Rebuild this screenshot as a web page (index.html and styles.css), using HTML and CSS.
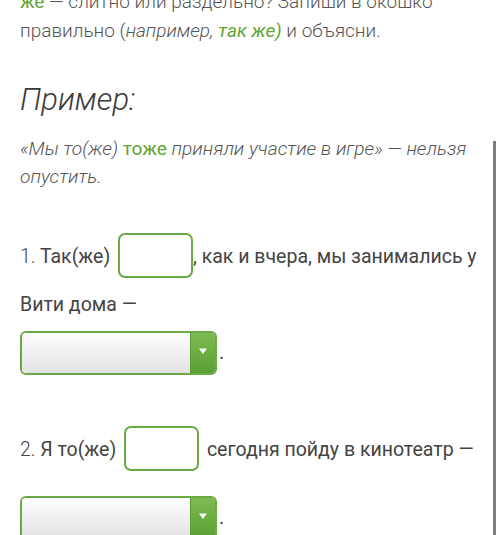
FILE: index.html
```html
<!DOCTYPE html>
<html lang="ru">
<head>
<meta charset="utf-8">
<link rel="stylesheet" href="styles.css">
</head>
<body>
<div class="page">
  <p class="intro"><span class="green">же</span> — слитно или раздельно? Запиши в окошко<br>правильно (<i>например, <span class="green">так же)</span></i> и объясни.</p>
  <h2 class="title">Пример:</h2>
  <p class="quote">«Мы то(же) <span class="green up">тоже</span> приняли участие в игре» — нельзя<br>опустить.</p>

  <div class="task task1">
    <p class="line"><span class="num">1.</span> Так(же) <span class="box"></span>, как и вчера, мы занимались у<br>Вити дома —</p>
    <p class="selline"><span class="select"><span class="sel-body"></span><span class="sel-btn"><svg width="10" height="8" viewBox="0 0 10 8"><path d="M1 1.5h8L5 7z" fill="#fff"/></svg></span></span>.</p>
  </div>

  <div class="task task2">
    <p class="line"><span class="num">2.</span> Я то(же) <span class="box box2"></span> сегодня пойду в кинотеатр —</p>
    <p class="selline"><span class="select"><span class="sel-body"></span><span class="sel-btn"><svg width="10" height="8" viewBox="0 0 10 8"><path d="M1 1.5h8L5 7z" fill="#fff"/></svg></span></span>.</p>
  </div>
</div>
<div class="scrollbar"></div>
</body>
</html>
```
FILE: styles.css
```css
html, body {
  margin: 0;
  padding: 0;
  background: #fff;
  overflow: hidden;
}
body {
  width: 500px;
  height: 535px;
  font-family: Roboto, "Noto Sans", sans-serif;
}
.page {
  padding: 0 0 0 20px;
}
p, h2 { margin: 0; }
.green { color: #5fa636; }
.up { font-style: normal; font-weight: 400; }
.intro {
  margin-top: -13px;
  font-size: 19px;
  font-weight: 300;
  line-height: 29px;
  color: #555;
  white-space: nowrap;
}
.intro .green { font-weight: 400; }
.title {
  margin-top: 37px;
  font-size: 31px;
  font-style: italic;
  font-weight: 300;
  line-height: 36px;
  color: #3a3a3a;
}
.quote {
  margin-top: 17px;
  font-size: 19.2px;
  font-style: italic;
  font-weight: 300;
  line-height: 28px;
  color: #555;
  white-space: nowrap;
}
.task {
  font-size: 19.5px;
  color: #444;
  white-space: nowrap;
}
.task1 { margin-top: 42px; }
.task2 { margin-top: 49px; }
.line { line-height: 48px; }
.num { font-weight: 300; }
.box {
  display: inline-block;
  box-sizing: border-box;
  width: 75px;
  height: 45px;
  margin: 0 0 0 3px;
  border: 2px solid #6aaa45;
  border-radius: 7px;
  vertical-align: -15px;
}
.box2 { margin: 0 3px 0 3px; }
.selline { line-height: 48px; }
.task2 .selline { margin-top: 20px; }
.select {
  display: inline-flex;
  box-sizing: border-box;
  width: 197px;
  height: 44px;
  border: 2px solid #6aaa45;
  border-radius: 6px;
  overflow: hidden;
  vertical-align: -14px;
  margin-right: 2px;
}
.sel-body {
  flex: 1;
  background: linear-gradient(#fdfdfd, #e3e3e3);
}
.sel-btn {
  width: 25px;
  display: flex;
  align-items: center;
  justify-content: center;
  padding-bottom: 4px;
  box-sizing: border-box;
  background: linear-gradient(#7dbc52, #5b9e33);
  border-left: 1px solid #5d9a38;
}
.scrollbar {
  position: fixed;
  left: 493px;
  top: 141px;
  width: 3px;
  bottom: 0;
  background: #7d7d7d;
}
```
